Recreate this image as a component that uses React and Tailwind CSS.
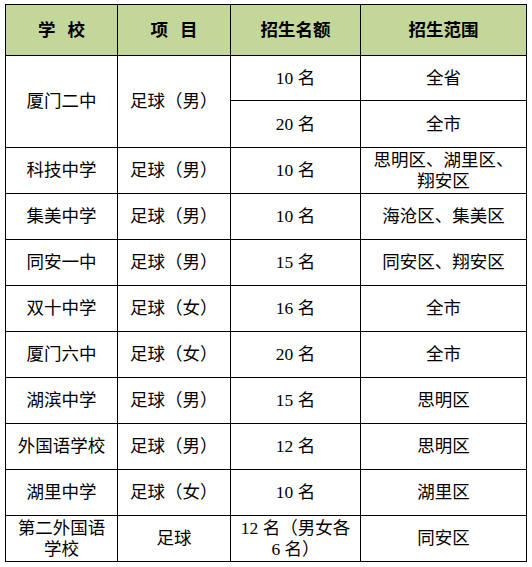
import React from 'react';

const rows = [
    { school: '科技中学', item: '足球（男）', quota: '10 名', range: <>思明区、湖里区、<br />翔安区</> },
    { school: '集美中学', item: '足球（男）', quota: '10 名', range: '海沧区、集美区' },
    { school: '同安一中', item: '足球（男）', quota: '15 名', range: '同安区、翔安区' },
    { school: '双十中学', item: '足球（女）', quota: '16 名', range: '全市' },
    { school: '厦门六中', item: '足球（女）', quota: '20 名', range: '全市' },
    { school: '湖滨中学', item: '足球（男）', quota: '15 名', range: '思明区' },
    { school: '外国语学校', item: '足球（男）', quota: '12 名', range: '思明区' },
    { school: '湖里中学', item: '足球（女）', quota: '10 名', range: '湖里区' },
];

const cell = "border border-black leading-[21px]";
const left = cell + " pl-3 pr-2 text-left";
const center = cell + " px-2 text-center";

const App = () => {
    return (
        <div className="bg-white min-h-screen pl-[5px] pt-[4px] text-black text-[17.5px]"
            style={{ fontFamily: '"Liberation Serif", "Noto Sans CJK SC", serif' }}>
            <table className="table-fixed border-collapse w-[522px]">
                <colgroup>
                    <col className="w-[112px]" />
                    <col className="w-[113px]" />
                    <col className="w-[130px]" />
                    <col className="w-[166px]" />
                </colgroup>
                <thead>
                    <tr className="h-[51px] bg-[#c4d79b] font-bold">
                        <th className={center}><span className="mr-3">学</span>校</th>
                        <th className={center}><span className="mr-3">项</span>目</th>
                        <th className={center}>招生名额</th>
                        <th className={center}>招生范围</th>
                    </tr>
                </thead>
                <tbody>
                    <tr className="h-[45px]">
                        <td rowSpan={2} className={center}>厦门二中</td>
                        <td rowSpan={2} className={left}>足球（男）</td>
                        <td className={center}>10 名</td>
                        <td className={center}>全省</td>
                    </tr>
                    <tr className="h-[47px]">
                        <td className={center}>20 名</td>
                        <td className={center}>全市</td>
                    </tr>
                    {rows.map((r, i) => (
                        <tr key={i} className="h-[46px]">
                            <td className={center}>{r.school}</td>
                            <td className={left}>{r.item}</td>
                            <td className={center}>{r.quota}</td>
                            <td className={center}>{r.range}</td>
                        </tr>
                    ))}
                    <tr className="h-[46px]">
                        <td className={center}>第二外国语<br />学校</td>
                        <td className={center}>足球</td>
                        <td className={center}>12 名（男女各<br />6 名）</td>
                        <td className={center}>同安区</td>
                    </tr>
                </tbody>
            </table>
        </div>
    );
};

export default App;
